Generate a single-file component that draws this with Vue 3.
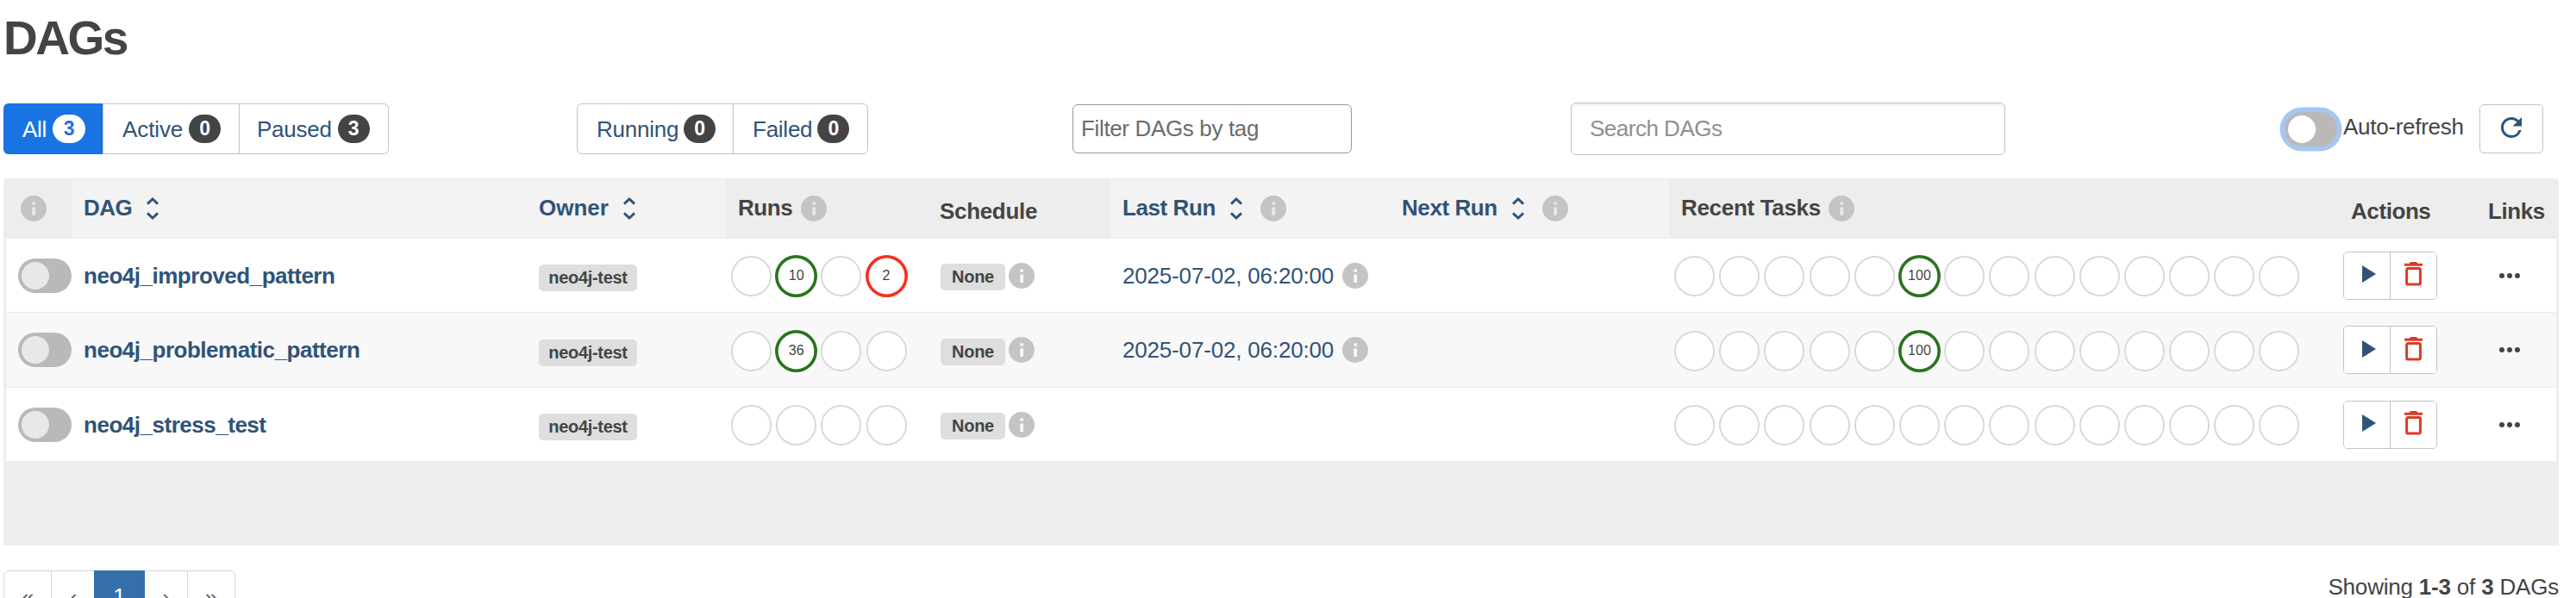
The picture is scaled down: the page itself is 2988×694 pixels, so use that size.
<script setup>
import { h } from 'vue'

const stateFilters = [
  { label: 'All', count: 3, cls: 'all' },
  { label: 'Active', count: 0, cls: 'act' },
  { label: 'Paused', count: 3, cls: 'paused' },
]
const runFilters = [
  { label: 'Running', count: 0, cls: 'running' },
  { label: 'Failed', count: 0, cls: 'failed-filter' },
]
const columns = [
  { label: '', info: true },
  { label: 'DAG', sort: true, cls: 't5' },
  { label: 'Owner', sort: true, cls: 't0' },
  { label: 'Runs', info: true, cls: 't4' },
  { label: 'Schedule', low: true, cls: 't3' },
  { label: 'Last Run', sort: true, info: true, cls: 't4' },
  { label: 'Next Run', sort: true, info: true, cls: 't4' },
  { label: 'Recent Tasks', info: true, cls: 't3' },
  { label: 'Actions', low: true, center: true, cls: 't4' },
  { label: 'Links', low: true, cls: 't4' },
]
const tasks = (n) => Array.from({ length: 14 }, (_, i) => (i === 5 ? n : 0))
const dags = [
  { name: 'neo4j_improved_pattern', runs: [0, 10, 0, 2], last: '2025-07-02, 06:20:00', tasks: tasks(100) },
  { name: 'neo4j_problematic_pattern', runs: [0, 36, 0, 0], last: '2025-07-02, 06:20:00', tasks: tasks(100) },
  { name: 'neo4j_stress_test', runs: [0, 0, 0, 0], last: '', tasks: tasks(0) },
]
const ringClass = (n, failed) => (n ? (failed ? 'ring failed' : 'ring success') : 'ring')

const InfoIcon = () =>
  h('svg', { width: 30, height: 30, viewBox: '0 0 30 30' }, [
    h('circle', { cx: 15, cy: 15, r: 15, fill: '#c4c4c4' }),
    h('path', { d: 'M13.4 7.4h3.6v3.2h-3.6zM13.4 13.6h3.6v9.4h-3.6z', fill: 'currentColor' }),
  ])
</script>

<template>
  <main class="page">
    <h2>DAGs</h2>

    <div class="toolbar">
      <div class="group states">
        <a v-for="f in stateFilters" :key="f.label" :class="['filter', f.cls]">
          <span class="text">{{ f.label }}</span><span class="badge">{{ f.count }}</span>
        </a>
      </div>
      <div class="group runs-group">
        <a v-for="f in runFilters" :key="f.label" :class="['filter', f.cls]">
          <span class="text">{{ f.label }}</span><span class="badge">{{ f.count }}</span>
        </a>
      </div>
      <div class="tag-input">Filter DAGs by tag</div>
      <div class="search-input">Search DAGs</div>
      <span class="switch focus"></span>
      <span class="auto">Auto-refresh</span>
      <button class="refresh">
        <svg width="24" height="24" viewBox="4 4 16 16">
          <path
            fill="#305377"
            d="M17.65 6.35A7.958 7.958 0 0 0 12 4c-4.42 0-7.99 3.58-7.99 8s3.57 8 7.99 8c3.73 0 6.84-2.55 7.73-6h-2.08A5.99 5.99 0 0 1 12 18c-3.31 0-6-2.69-6-6s2.69-6 6-6c1.66 0 3.14.69 4.22 1.78L13 11h7V4l-2.35 2.35z"
          />
        </svg>
      </button>
    </div>

    <div class="table">
      <div class="row head">
        <div
          v-for="(c, i) in columns"
          :key="i"
          :class="['cell', { sortable: c.sort, low: c.low, center: c.center, first: i === 0 }]"
        >
          <span v-if="c.label" :class="['text', c.cls]">{{ c.label }}</span>
          <svg v-if="c.sort" class="sort" width="14" height="26" viewBox="0 0 14 26">
            <path d="M1 7.6l6-5.6 6 5.6M1 18.4l6 5.6 6-5.6" fill="none" stroke="#305377" stroke-width="2.9" />
          </svg>
          <InfoIcon v-if="c.info" class="info" />
        </div>
      </div>

      <div v-for="d in dags" :key="d.name" class="row body">
        <div class="cell first"><span class="switch off"></span></div>
        <div class="cell"><a class="name">{{ d.name }}</a></div>
        <div class="cell"><span class="label owner">neo4j-test</span></div>
        <div class="cell rings">
          <span v-for="(n, i) in d.runs" :key="i" :class="ringClass(n, i === 3)">{{ n || '' }}</span>
        </div>
        <div class="cell">
          <span class="label schedule">None</span><InfoIcon class="info-near" />
        </div>
        <div class="cell">
          <template v-if="d.last"><a class="date">{{ d.last }}</a><InfoIcon class="info" /></template>
        </div>
        <div class="cell"></div>
        <div class="cell rings">
          <span v-for="(n, i) in d.tasks" :key="i" :class="ringClass(n, false)">{{ n || '' }}</span>
        </div>
        <div class="cell buttons">
          <div class="actions">
            <button class="play">
              <svg width="16" height="20" viewBox="0 0 16 20"><path d="M0 0l16 10L0 20z" fill="#305377" /></svg>
            </button>
            <button class="trash">
              <svg width="21" height="28" viewBox="0 0 21 28">
                <path d="M0 1.8h5.6L7 0h7l1.4 1.8H21v3H0z" fill="#d93c26" />
                <rect x="2.6" y="7.6" width="15.8" height="18.4" rx="1.4" fill="none" stroke="#d93c26" stroke-width="3" />
              </svg>
            </button>
          </div>
        </div>
        <div class="cell links">
          <svg width="24" height="6" viewBox="0 0 24 6" fill="#444">
            <circle cx="3" cy="3" r="3" /><circle cx="12" cy="3" r="3" /><circle cx="21" cy="3" r="3" />
          </svg>
        </div>
      </div>
    </div>

    <div class="footer">
      <div class="pager">
        <span class="p1">«</span><span class="p2">‹</span><span class="p3">1</span><span class="p4">›</span><span class="p5">»</span>
      </div>
      <div class="showing">Showing <b>1-3</b> of <b>3</b> DAGs</div>
    </div>
  </main>
</template>

<style>
body {
  margin: 0;
  background: #fff;
}
</style>

<style scoped>
* {
  box-sizing: border-box;
}
.page {
  width: 2988px;
  height: 694px;
  overflow: hidden;
  padding: 0 20px 0 4px;
  background: #fff;
  color: #444;
  font-family: 'Liberation Sans', Arial, sans-serif;
  font-size: 26px;
  line-height: 30px;
}
svg {
  display: block;
  flex: none;
}
button {
  padding: 0;
  background: #fff;
  border: 0;
}
h2 {
  margin: 0;
  height: 88px;
  line-height: 88px;
  font-size: 55px;
  letter-spacing: -2.5px;
}

.toolbar {
  display: flex;
  align-items: center;
  height: 61px;
  margin-top: 31px;
}
.group {
  display: flex;
  height: 59px;
  border: 1px solid #c4c4c4;
  border-radius: 6px;
}
.states {
  width: 447px;
  border-left: 0;
}
.runs-group {
  width: 338px;
  margin-left: 218px;
}
.filter {
  display: flex;
  align-items: center;
  color: #305377;
  padding-left: 22px;
  letter-spacing: -0.25px;
}
.filter + .filter {
  border-left: 1px solid #c4c4c4;
}
.all {
  width: 115px;
  margin: -1px 0;
  border-radius: 6px 0 0 6px;
  background: #1a73e3;
  color: #fff;
}
.act {
  width: 158px;
  letter-spacing: -0.1px;
}
.paused {
  padding-left: 20px;
}
.badge {
  margin-left: 7px;
  width: 37px;
  height: 33px;
  border-radius: 17px;
  background: #444;
  color: #fff;
  font-size: 23px;
  font-weight: bold;
  line-height: 33px;
  text-align: center;
  letter-spacing: 0;
}
.all .badge {
  width: 38px;
  background: #fff;
  color: #1a73e3;
}
.running {
  width: 180px;
}
.failed-filter .badge,
.running .badge {
  margin-left: 6px;
}
.tag-input {
  width: 324px;
  height: 57px;
  margin-left: 237px;
  padding-left: 9px;
  border: 1px solid #999;
  border-radius: 6px;
  line-height: 54px;
  color: #6b6b6b;
  letter-spacing: -0.35px;
}
.search-input {
  width: 504px;
  height: 61px;
  margin-left: 254px;
  padding-left: 21px;
  border: 1px solid #c4c4c4;
  border-radius: 6px;
  box-shadow: inset 0 2px 2px rgba(0, 0, 0, 0.075);
  line-height: 58px;
  color: #8f8f8f;
  letter-spacing: -0.5px;
}
.switch {
  display: block;
  flex: none;
  width: 62px;
  height: 40px;
  padding: 4px;
  border-radius: 20px;
  background: #bbb9b8;
}
.switch::before {
  content: '';
  display: block;
  width: 32px;
  height: 32px;
  border-radius: 50%;
  background: #fff;
}
.switch.off::before {
  background: #e8e8e8;
}
.switch.focus {
  width: 61px;
  margin-left: 324px;
  box-shadow: 0 0 0 5.5px #a4c7f4;
}
.auto {
  margin: -5px 0 0 7px;
  width: 158px;
  white-space: nowrap;
  letter-spacing: -0.28px;
}
.refresh {
  display: flex;
  justify-content: center;
  width: 74px;
  height: 57px;
  padding-top: 14px;
  border: 1px solid #c4c4c4;
  border-radius: 5px;
}

.table {
  width: 2964px;
  height: 426px;
  margin-top: 27px;
  padding: 0 3px;
  border-radius: 4px 4px 0 0;
  background: #ededed;
}
.row {
  display: grid;
  grid-template-columns: 76px 528px 231px 234px 212px 324px 324px 767px 169px 93px;
}
.cell {
  display: flex;
  align-items: center;
  padding-left: 14px;
}
.head {
  height: 70px;
  padding: 1px 0;
  font-weight: bold;
}
.head .cell {
  color: #444;
}
.head .sortable {
  background: #f3f3f3;
}
.head .sortable .text {
  color: #305377;
}
.head .text {
  margin-top: -2px;
}
.head .low .text {
  margin-top: 5px;
}
.head .low.center {
  padding-left: 24px;
}
.sort {
  margin-left: 17px;
}
.info {
  margin-left: 9.5px;
  color: #fff;
}
.head .info {
  color: #e8e8e8;
}
.sort + .info {
  margin-left: 21px;
}
.t0 {
  letter-spacing: 0;
}
.t3 {
  letter-spacing: -0.32px;
}
.t4 {
  letter-spacing: -0.42px;
}
.t5 {
  letter-spacing: -0.5px;
}
.head .first {
  padding-left: 15px;
}
.head .first .info {
  margin-left: 2px;
}
.body .first {
  padding-left: 14px;
}
.body {
  height: 86px;
  background: #fff;
  border-bottom: 1px solid #e9e9e9;
}
.body:nth-child(3) {
  height: 87px;
  background: #f8f8f8;
}
.body:nth-child(4) {
  height: 85px;
  border-bottom: 0;
}
.name {
  color: #305377;
  font-weight: bold;
  letter-spacing: -0.48px;
}
.date {
  color: #305377;
  letter-spacing: -0.18px;
  white-space: nowrap;
}
.label {
  height: 31px;
  border-radius: 5px;
  background: #dedede;
  font-size: 20px;
  line-height: 31px;
  font-weight: bold;
  text-align: center;
}
.owner {
  width: 114px;
  margin-top: 6px;
  letter-spacing: -0.3px;
}
.schedule {
  width: 75px;
  margin: 4px 0 0 1px;
  letter-spacing: -0.3px;
}
.info-near {
  margin-left: 3.5px;
  color: #fff;
}
.cell.rings {
  padding-left: 5px;
  gap: 3.2px;
}
.ring {
  flex: none;
  width: 49px;
  height: 49px;
  margin-top: 2px;
  border: 1px solid transparent;
  border-radius: 50%;
  background: #fff;
  background-clip: padding-box;
  box-shadow: inset 0 0 0 1.8px #d6d6d6;
  font-size: 16px;
  line-height: 46px;
  text-align: center;
}
.ring.success {
  border: 0;
  box-shadow: inset 0 0 0 3.6px #28741c;
  line-height: 48px;
}
.ring.failed {
  border: 0;
  box-shadow: inset 0 0 0 3.6px #f6301d;
  line-height: 48px;
}
.cell.buttons {
  padding-left: 15px;
}
.actions {
  display: flex;
  width: 109px;
  height: 56px;
  border: 1px solid #c4c4c4;
  border-radius: 5px;
  overflow: hidden;
}
.play {
  width: 53px;
  padding: 0 0 3px 21px;
}
.trash {
  width: 54px;
  padding: 0 0 3px 16px;
  border-left: 1px solid #c4c4c4;
}
.cell.links {
  padding-left: 27px;
}

.footer {
  display: flex;
  justify-content: space-between;
  width: 2964px;
  margin-top: 29px;
}
.pager {
  display: flex;
  width: 269px;
  height: 60px;
  border: 1px solid #d8d8d8;
  border-radius: 6px;
  color: #666;
  line-height: 60px;
  text-align: center;
}
.pager span + span {
  border-left: 1px solid #d8d8d8;
}
.p1 {
  width: 54px;
}
.p2 {
  width: 51px;
}
.pager .p3 {
  width: 59px;
  margin-top: -1px;
  margin-left: -1px;
  border: 0;
  background: #346fab;
  color: #fff;
}
.pager .p4 {
  width: 49px;
  border: 0;
}
.p5 {
  flex: 1;
}
.showing {
  margin-top: 4px;
  letter-spacing: -0.2px;
}
</style>
